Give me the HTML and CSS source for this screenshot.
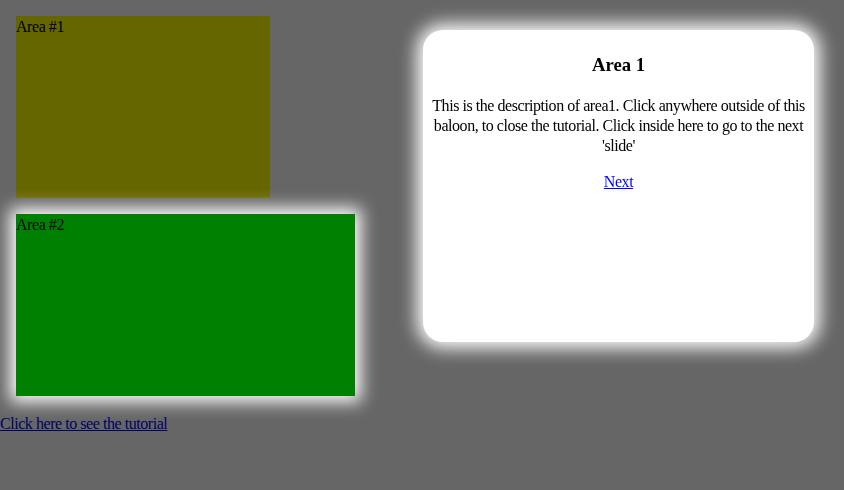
FILE: index.html
```html
<!DOCTYPE html>
<html>
<head>
<meta charset="utf-8">
<title>Tutorial</title>
<link rel="stylesheet" href="styles.css">
</head>
<body>
<div class="area area-one">Area #1</div>
<div class="area area-two highlighted">Area #2</div>
<a class="start-link" href="#">Click here to see the tutorial</a>
<div class="overlay"></div>
<div class="balloon">
  <h3 class="balloon-title">Area 1</h3>
  <p class="balloon-text">This is the description of area1. Click anywhere outside of this baloon, to close the tutorial. Click inside here to go to the next 'slide'</p>
  <p class="balloon-next"><a href="#">Next</a></p>
</div>
</body>
</html>
```
FILE: styles.css
```css
html, body {
  margin: 0;
  padding: 0;
  background: #ffffff;
  font-family: "Liberation Serif", "Times New Roman", serif;
  font-size: 16px;
  letter-spacing: -0.45px;
  color: #000;
}
body {
  height: 490px;
  overflow: hidden;
}
.area {
  margin: 16px;
  height: 182px;
  line-height: 22px;
}
.area-one {
  width: 254px;
  background: #ffff00;
}
.area-two {
  width: 339px;
  background: #008000;
}
.highlighted {
  position: relative;
  z-index: 2;
  box-shadow: 0 0 16px 6px #ffffff;
}
.start-link {
  display: block;
  width: max-content;
  color: #0000ff;
  line-height: 24px;
}
.overlay {
  position: fixed;
  inset: 0;
  background: rgba(0, 0, 0, 0.6);
  z-index: 1;
}
.balloon {
  position: absolute;
  left: 423px;
  top: 30px;
  width: 379px;
  height: 300px;
  padding: 6px;
  background: #ffffff;
  border-radius: 20px;
  box-shadow: 0 0 18px 6px #ffffff;
  z-index: 3;
  text-align: center;
}
.balloon-title {
  margin: 18px 0 20px;
  font-size: 18.72px;
  line-height: 22px;
  font-weight: bold;
  letter-spacing: 0;
}
.balloon-text {
  margin: 0 0 16px;
  line-height: 20px;
}
.balloon-next {
  margin: 0;
  line-height: 20px;
}
.balloon-next a {
  color: #0000ff;
}
```
